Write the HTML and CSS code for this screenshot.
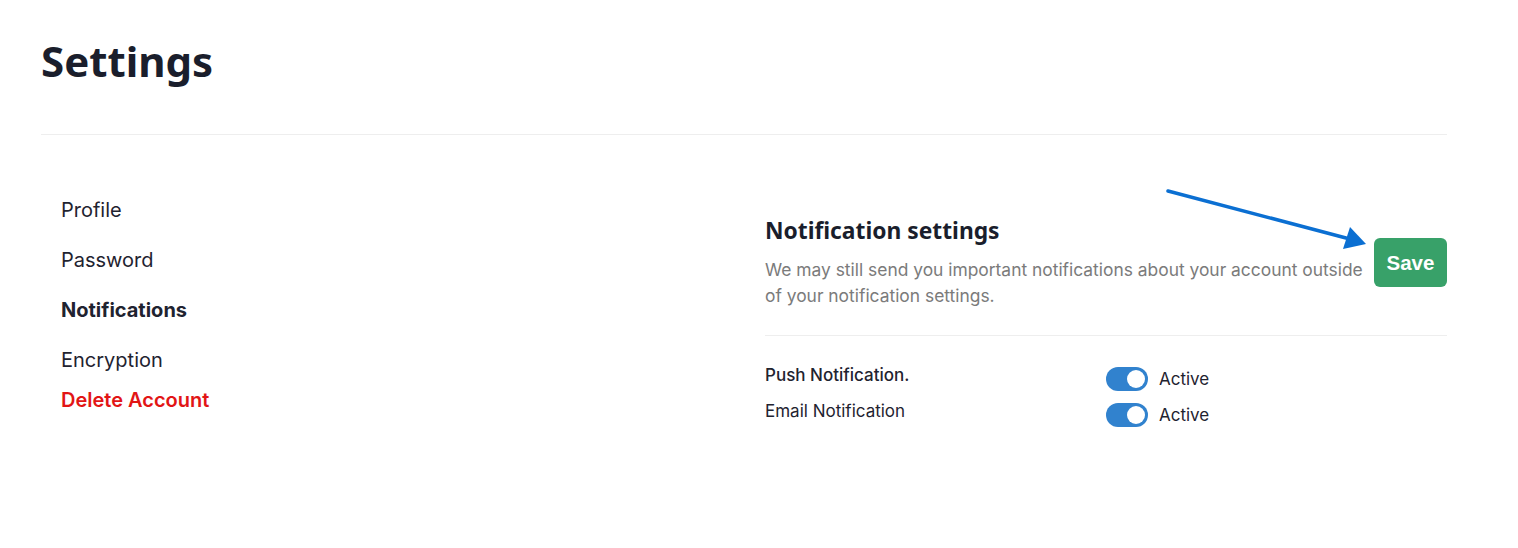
FILE: index.html
```
<!DOCTYPE html>
<html lang="en">
<head>
    <meta charset="UTF-8">
    <meta name="viewport" content="width=device-width, initial-scale=1.0">
    <title>Settings</title>
    <link rel="stylesheet" href="styles.css">
</head>
<body>
    <div class="page">
        <h1 class="page-title">Settings</h1>

        <div class="layout">
            <nav class="side-nav">
                <a href="#" class="nav-item">Profile</a>
                <a href="#" class="nav-item">Password</a>
                <a href="#" class="nav-item active">Notifications</a>
                <a href="#" class="nav-item">Encryption</a>
                <a href="#" class="nav-item danger">Delete Account</a>
            </nav>

            <section class="panel">
                <div class="panel-head">
                    <div class="panel-intro">
                        <h2>Notification settings</h2>
                        <p>We may still send you important notifications about your account outside of your notification settings.</p>
                    </div>
                    <button class="btn-save">Save</button>

                    <!-- annotation arrow pointing at the button -->
                    <svg class="hint-arrow" width="220" height="70" viewBox="0 0 220 70">
                        <line x1="4" y1="4" x2="182" y2="51" stroke="#0b6fd2" stroke-width="3.5" stroke-linecap="round"/>
                        <polygon points="202,57 179,62 186,40" fill="#0b6fd2"/>
                    </svg>
                </div>

                <div class="toggle-list">
                    <div class="toggle-row">
                        <span class="toggle-label strong">Push Notification.</span>
                        <label class="toggle">
                            <span class="switch"><span class="knob"></span></span>
                            Active
                        </label>
                    </div>
                    <div class="toggle-row">
                        <span class="toggle-label">Email Notification</span>
                        <label class="toggle">
                            <span class="switch"><span class="knob"></span></span>
                            Active
                        </label>
                    </div>
                </div>
            </section>
        </div>
    </div>
</body>
</html>
```

FILE: styles.css
```
body {
    margin: 0;
    font-family: Inter, "Noto Sans", sans-serif;
    color: #1f2330;
    background: #fff;
}
.page {
    width: 1406px;
    margin-left: 41px;
}
.page-title {
    font-family: "Noto Sans", sans-serif;
    font-size: 42px;
    font-weight: 700;
    color: #1a1e2c;
    margin: 0;
    padding: 28px 0 40px;
    line-height: 66px;
    border-bottom: 1px solid #eeeeee;
}
.layout {
    display: grid;
    grid-template-columns: 1fr 1fr;
    column-gap: 42px;
    padding-top: 61px;
}
.side-nav {
    display: flex;
    flex-direction: column;
    padding-left: 20px;
}
.nav-item {
    font-size: 20px;
    line-height: 28px;
    color: #1f2330;
    text-decoration: none;
    margin-bottom: 22px;
}
.nav-item.active {
    font-weight: 700;
}
.nav-item.danger {
    color: #e21515;
    font-weight: 600;
    margin-top: -10px;
}
.panel {
    padding-top: 21px;
}
.panel-head {
    position: relative;
    display: flex;
    align-items: flex-start;
    justify-content: space-between;
    padding-bottom: 26px;
    border-bottom: 1px solid #eeeeee;
}
.panel-intro h2 {
    font-family: "Noto Sans", sans-serif;
    font-size: 22.8px;
    font-weight: 700;
    color: #1a1e2c;
    margin: 0;
    line-height: 28px;
}
.panel-intro p {
    margin: 12px 0 0;
    font-size: 17.4px;
    line-height: 26px;
    color: #7b7b7b;
    max-width: 605px;
}
.btn-save {
    margin-top: 21px;
    width: 73px;
    height: 49px;
    border: none;
    border-radius: 6px;
    background: #38a169;
    color: #fff;
    font-family: "Liberation Sans", Arial, sans-serif;
    font-size: 20.5px;
    font-weight: 700;
}
.hint-arrow {
    position: absolute;
    left: 399px;
    top: -30px;
    overflow: visible;
}
.toggle-list {
    padding-top: 25px;
}
.toggle-row {
    display: grid;
    grid-template-columns: 1fr 1fr;
    margin-bottom: 10px;
    height: 26px;
}
.toggle-label {
    font-size: 17px;
    line-height: 26px;
    padding-top: 1px;
    color: #1f2330;
}
.toggle-label.strong {
    font-weight: 500;
}
.toggle {
    display: flex;
    align-items: center;
    gap: 11px;
    font-size: 17px;
    line-height: 26px;
    color: #1f2330;
    margin-top: 5px;
}
.switch {
    width: 42px;
    height: 24px;
    border-radius: 12px;
    background: #3182ce;
    position: relative;
}
.knob {
    position: absolute;
    right: 3px;
    top: 3px;
    width: 18px;
    height: 18px;
    border-radius: 50%;
    background: #fff;
}
```
